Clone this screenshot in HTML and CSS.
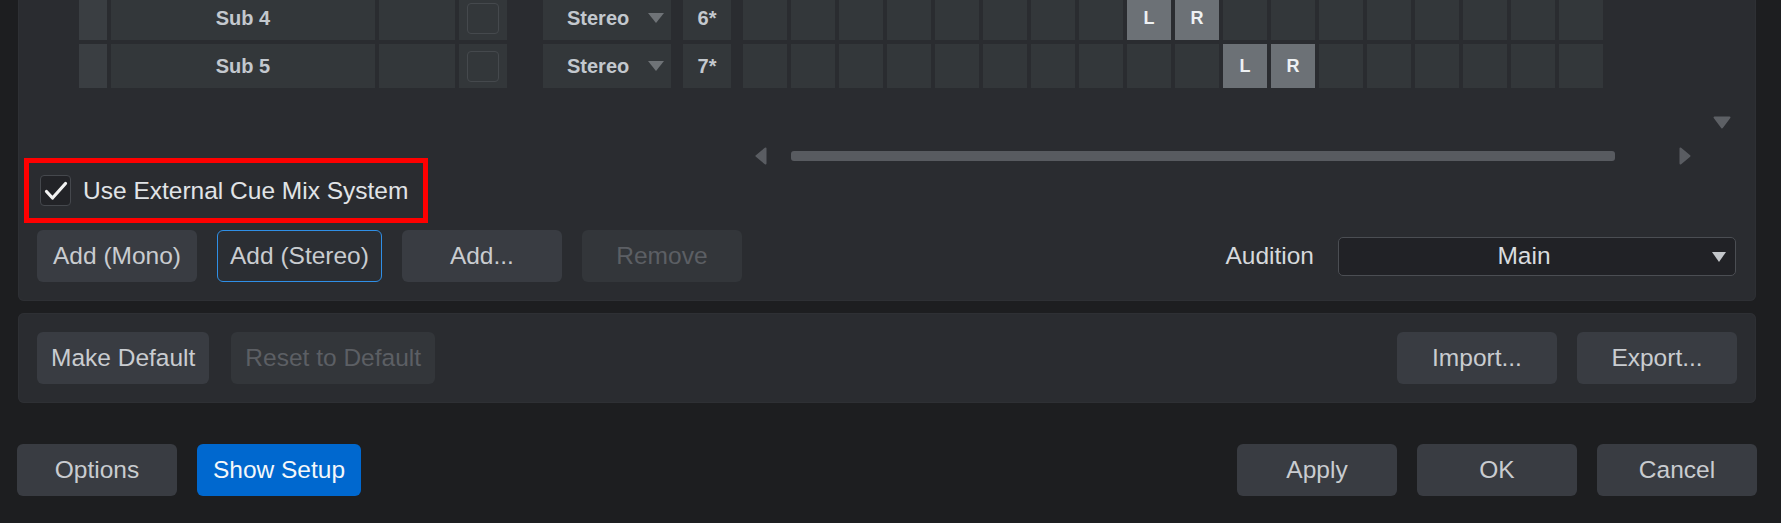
FILE: index.html
```html
<!DOCTYPE html>
<html>
<head>
<meta charset="utf-8">
<link rel="stylesheet" href="styles.css">
</head>
<body>
<div class="page">
  <section class="panel panel-main">
    <div class="grid">
      <div class="row">
        <div class="cell c-idx"></div>
        <div class="cell c-name">Sub 4</div>
        <div class="cell c-blank"></div>
        <div class="cell c-chk"><span class="mini-box"></span></div>
        <div class="cell c-type"><span>Stereo</span><span class="tri-down small"></span></div>
        <div class="cell c-ch">6*</div>
        <div class="matrix">
          <div class="cell m"></div><div class="cell m"></div><div class="cell m"></div><div class="cell m"></div><div class="cell m"></div><div class="cell m"></div><div class="cell m"></div><div class="cell m"></div>
          <div class="cell m on">L</div><div class="cell m on">R</div>
          <div class="cell m"></div><div class="cell m"></div><div class="cell m"></div><div class="cell m"></div><div class="cell m"></div><div class="cell m"></div><div class="cell m"></div><div class="cell m"></div>
        </div>
      </div>
      <div class="row">
        <div class="cell c-idx"></div>
        <div class="cell c-name">Sub 5</div>
        <div class="cell c-blank"></div>
        <div class="cell c-chk"><span class="mini-box"></span></div>
        <div class="cell c-type"><span>Stereo</span><span class="tri-down small"></span></div>
        <div class="cell c-ch">7*</div>
        <div class="matrix">
          <div class="cell m"></div><div class="cell m"></div><div class="cell m"></div><div class="cell m"></div><div class="cell m"></div><div class="cell m"></div><div class="cell m"></div><div class="cell m"></div><div class="cell m"></div><div class="cell m"></div>
          <div class="cell m on">L</div><div class="cell m on">R</div>
          <div class="cell m"></div><div class="cell m"></div><div class="cell m"></div><div class="cell m"></div><div class="cell m"></div><div class="cell m"></div>
        </div>
      </div>
    </div>

    <div class="vscroll-row">
      <svg class="scroll-down" width="18" height="13" viewBox="0 0 18 13"><path d="M1.5 1.5 H16.5 L9 11.5 Z" fill="#5d6065" stroke="#5d6065" stroke-width="2" stroke-linejoin="round"/></svg>
    </div>

    <div class="hscroll-row">
      <svg class="arrow-left" width="12" height="18" viewBox="0 0 12 18"><path d="M10.5 1.5 V16.5 L1.5 9 Z" fill="#5a5d62" stroke="#5a5d62" stroke-width="2" stroke-linejoin="round"/></svg>
      <div class="hbar"></div>
      <svg class="arrow-right" width="12" height="18" viewBox="0 0 12 18"><path d="M1.5 1.5 V16.5 L10.5 9 Z" fill="#5a5d62" stroke="#5a5d62" stroke-width="2" stroke-linejoin="round"/></svg>
    </div>

    <div class="check-row">
      <span class="checkbox">
        <svg width="31" height="31" viewBox="0 0 31 31"><path d="M6.5 16.5 L12.5 23 L25.5 8.5" fill="none" stroke="#f2f2f2" stroke-width="3.2" stroke-linecap="round" stroke-linejoin="round"/></svg>
      </span>
      <span class="check-label">Use External Cue Mix System</span>
      <div class="annotation"></div>
    </div>

    <div class="btn-row">
      <button class="btn">Add (Mono)</button>
      <button class="btn focus">Add (Stereo)</button>
      <button class="btn">Add...</button>
      <button class="btn disabled">Remove</button>
      <div class="spacer"></div>
      <span class="field-label">Audition</span>
      <div class="dropdown"><span class="dd-text">Main</span><span class="tri-down dd-arrow"></span></div>
    </div>
  </section>

  <section class="panel panel-presets">
    <button class="btn">Make Default</button>
    <button class="btn disabled">Reset to Default</button>
    <div class="spacer"></div>
    <button class="btn">Import...</button>
    <button class="btn">Export...</button>
  </section>

  <footer class="footer">
    <button class="btn">Options</button>
    <button class="btn primary">Show Setup</button>
    <div class="spacer"></div>
    <button class="btn">Apply</button>
    <button class="btn">OK</button>
    <button class="btn">Cancel</button>
  </footer>
</div>
</body>
</html>
```

FILE: styles.css
```css
* { box-sizing: border-box; }

html, body {
  margin: 0;
  padding: 0;
  width: 1781px;
  height: 523px;
  overflow: hidden;
  background: #1d1e20;
  font-family: "Liberation Sans", Arial, sans-serif;
}

.page {
  padding: 0 25px 0 18px;
}

.panel {
  background: #2a2c30;
  border-radius: 6px;
  box-shadow: inset 0 0 0 1px #2e3034;
}

.panel-main {
  margin-top: -20px;
  padding: 16px 20px 19px 19px;
  display: flex;
  flex-direction: column;
}

/* ---------- channel grid ---------- */
.grid {
  display: flex;
  flex-direction: column;
  gap: 4px;
  margin-left: 42px;
}

.row {
  display: flex;
  gap: 4px;
  height: 44px;
}

.cell {
  height: 44px;
  background: #33373a;
  color: #c3c8ce;
  font-weight: bold;
  font-size: 20px;
  display: flex;
  align-items: center;
  justify-content: center;
}

.c-idx { width: 28px; background: #3a3e42; }
.c-name { width: 264px; }
.c-blank { width: 76px; }
.c-chk { width: 48px; }
.c-type {
  width: 128px;
  margin-left: 32px;
  justify-content: space-between;
  padding: 0 7px 0 24px;
}
.c-ch { width: 48px; margin-left: 8px; }

.mini-box {
  width: 32px;
  height: 31px;
  border: 1.5px solid #45494d;
  border-radius: 4px;
}

.matrix {
  display: flex;
  gap: 4px;
  margin-left: 8px;
}

.m { width: 44px; }
.m.on {
  background: #6c7176;
  color: #eef1f3;
  font-size: 18px;
}

.tri-down {
  width: 0;
  height: 0;
  border-left: 8px solid transparent;
  border-right: 8px solid transparent;
  border-top: 10px solid #6f7377;
}

/* ---------- scroll controls ---------- */
.vscroll-row {
  display: flex;
  justify-content: flex-end;
  margin-top: 28px;
  height: 13px;
  padding-right: 5px;
}

.scroll-down { display: block; }

.hscroll-row {
  display: flex;
  align-items: center;
  margin-top: 18px;
  height: 17px;
  padding-left: 718px;
}

.arrow-left, .arrow-right { display: block; }

.hbar {
  width: 824px;
  height: 10px;
  border-radius: 3px;
  background: #585b60;
  margin-left: 24px;
  margin-right: 64px;
}

/* ---------- checkbox ---------- */
.check-row {
  position: relative;
  display: flex;
  align-items: center;
  margin-top: 11px;
  height: 31px;
}

.checkbox {
  width: 31px;
  height: 31px;
  margin-left: 3px;
  background: #222327;
  border: 1.5px solid #45484d;
  border-radius: 4px;
  display: flex;
  align-items: center;
  justify-content: center;
}

.checkbox svg { display: block; flex: none; }

.check-label {
  margin-left: 12px;
  font-size: 24.5px;
  color: #e1e4e7;
}

.annotation {
  position: absolute;
  left: -13px;
  top: -17px;
  width: 404px;
  height: 65px;
  border: 5px solid #ff0000;
}

/* ---------- buttons ---------- */
.btn-row {
  display: flex;
  align-items: center;
  gap: 20px;
  margin-top: 24px;
  height: 52px;
}

.spacer { flex: 1; }

.btn {
  height: 52px;
  min-width: 160px;
  padding: 0 14px;
  border: none;
  border-radius: 6px;
  background: #393c42;
  color: #c9ccd0;
  font-family: "Liberation Sans", Arial, sans-serif;
  font-size: 24.5px;
  display: flex;
  align-items: center;
  justify-content: center;
}

.btn.focus {
  background: #2b2e33;
  border: 1.5px solid #2f8fe6;
  color: #c9ccd0;
  padding: 0 12px;
}

.btn.disabled {
  background: #33363a;
  color: #5c5f64;
}

.btn.primary {
  background: #0068cf;
  color: #f4f7fa;
  min-width: 164px;
}

.field-label {
  font-size: 24.5px;
  color: #d6d9dc;
  margin-right: 4px;
}

.dropdown {
  width: 398px;
  height: 39px;
  background: #212226;
  border: 1.5px solid #4b4e53;
  border-radius: 5px;
  display: flex;
  align-items: center;
  position: relative;
  padding-right: 26px;
}

.dd-text {
  flex: 1;
  text-align: center;
  font-size: 24.5px;
  color: #d9dcdf;
}

.dd-arrow {
  position: absolute;
  right: 9px;
  top: 14px;
  border-left-width: 7px;
  border-right-width: 7px;
  border-top: 10px solid #c3c6ca;
}

/* ---------- presets panel ---------- */
.panel-presets {
  margin-top: 12px;
  padding: 19px 19px 19px 19px;
  display: flex;
  align-items: center;
  gap: 22px;
}

.panel-presets .btn:nth-last-child(1) { margin-left: -2px; }

/* ---------- footer ---------- */
.footer {
  display: flex;
  align-items: center;
  gap: 20px;
  margin: 41px -1px 0 -1px;
}
```
